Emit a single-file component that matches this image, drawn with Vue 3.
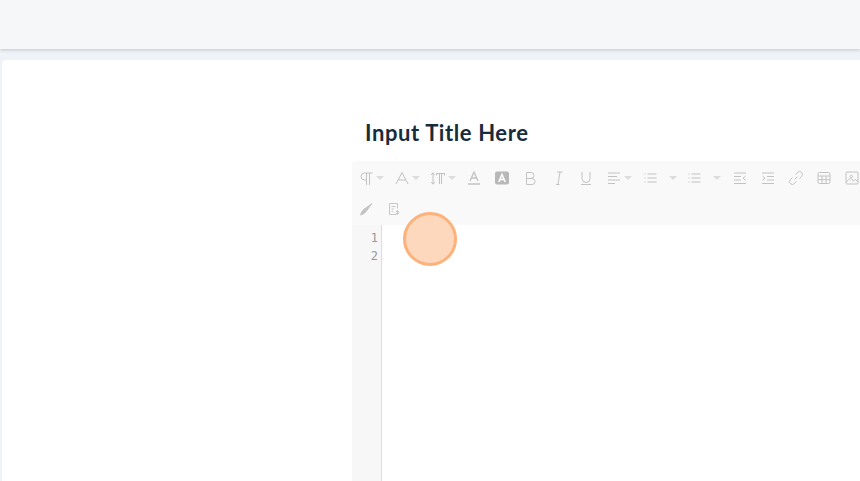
<script setup>
const row1 = [
  { w: 36, caret: 1, p: 'M14.5 3H6.5a3.5 3.5 0 0 0 0 7H8.5M8.5 3V15M11.5 3V15' },
  { w: 36, caret: 1, p: 'M2 14L8 2.5L14 14M4.2 10H11.8' },
  { w: 36, caret: 1, p: 'M3 3V14M1.2 5L3 2.8L4.8 5M1.2 12L3 14.2L4.8 12M6.5 3.5H15M9.5 3.5V14M11.5 3.5V14M6.5 3.5V5.5M14.5 3.5V5.5' },
  { w: 28, p: 'M4 11L8 2L12 11M5.3 8H10.7M2 14H14', thick: 1 },
  { w: 28, solid: 1 },
  { w: 28, p: 'M4.5 2.5H9a3 3 0 0 1 0 6H4.5ZM4.5 8.5H10a3 3 0 0 1 0 6H4.5Z' },
  { w: 28, p: 'M6 14.5H9.5M8 14.5L10 2M7 2H12.5' },
  { w: 28, p: 'M4 2V8.5a4 4 0 0 0 8 0V2M3 14.5H13' },
  { w: 36, caret: 1, p: 'M2 3H14M2 6.5H11M2 10H14M2 13.5H9' },
  { w: 44, caret: 2, p: 'M5.5 4H14.5M5.5 8H14.5M5.5 12H14.5M3 3.5V4.5M3 7.5V8.5M3 11.5V12.5' },
  { w: 46, caret: 2, p: 'M5.5 4H14.5M5.5 8H14.5M5.5 12H14.5M3 3.5V4.5M3 7.5V8.5M3 11.5V12.5' },
  { w: 28, p: 'M2 3H14M2 6.5H9M2 10H9M2 13.5H14M13.5 6.2L11 8.2L13.5 10.2' },
  { w: 28, p: 'M2 3H14M7 6.5H14M7 10H14M2 13.5H14M2.5 6.2L5 8.2L2.5 10.2' },
  { w: 28, p: 'M6.7 9.3L9.3 6.7M7.5 4.5L9.6 2.4a2.8 2.8 0 0 1 4 4L11.5 8.5M8.5 11.5L6.4 13.6a2.8 2.8 0 0 1-4-4L4.5 7.5' },
  { w: 28, p: 'M3.5 2.5H12.5a1.5 1.5 0 0 1 1.5 1.5V12a1.5 1.5 0 0 1-1.5 1.5H3.5A1.5 1.5 0 0 1 2 12V4a1.5 1.5 0 0 1 1.5-1.5ZM2 6H14M2 9.7H14M6 6V13.5M10 6V13.5' },
  { w: 28, p: 'M3 2H13a1 1 0 0 1 1 1V13a1 1 0 0 1-1 1H3a1 1 0 0 1-1-1V3a1 1 0 0 1 1-1ZM2.3 12L6.5 8L9.5 11L11.5 9.5L14 12M6 6.5a1.3 1.3 0 1 0 0-.1' },
]
const row2 = [
  { w: 28, p: 'M14 2.5L8.5 10C7 12 5 13.5 2.5 14C3 11.5 5 8.5 7 7.5Z', fill: 1 },
  { w: 28, p: 'M10.5 13.5H3.5V2.5H11.5V7.5M5.5 5.5H9.5M5.5 8H8M5.5 10.5H7M10 10.5H13M11.5 9V13.2M11.5 13.5L9.8 11.6M11.5 13.5L13.3 11.6' },
]
const lines = [1, 2]
</script>

<template>
  <div class="page">
    <header class="topbar"></header>
    <main class="card">
      <section class="content">
        <h1 class="title">Input Title Here</h1>
        <div class="editor">
          <div class="toolbar">
            <div class="row first">
              <span v-for="(b, i) in row1" :key="i" class="btn" :style="{ width: b.w + 'px' }">
                <svg class="icon" viewBox="0 0 16 16">
                  <template v-if="b.solid">
                    <rect x="1" y="1.5" width="14" height="13" rx="2" fill="#b8b8b8" />
                    <path d="M4.8 12L8 4.5L11.2 12M6 9.5H10" fill="none" stroke="#fff" stroke-width="1.6" />
                  </template>
                  <path v-else :d="b.p" :fill="b.fill ? '#c2c2c2' : 'none'" stroke="#c2c2c2" :stroke-width="b.thick ? 1.3 : 1" />
                </svg>
                <i v-if="b.caret" class="caret" :class="{ far: b.caret === 2 }"></i>
              </span>
            </div>
            <div class="row">
              <span v-for="(b, i) in row2" :key="i" class="btn" :style="{ width: b.w + 'px' }">
                <svg class="icon" viewBox="0 0 16 16">
                  <path :d="b.p" :fill="b.fill ? '#c2c2c2' : 'none'" stroke="#c8c8c8" />
                </svg>
              </span>
            </div>
          </div>
          <div class="code">
            <div class="gutter">
              <div v-for="n in lines" :key="n" class="num">{{ n }}</div>
            </div>
            <div class="lines"></div>
          </div>
        </div>
      </section>
    </main>
    <div class="cursor"></div>
  </div>
</template>

<style scoped>
.page {
  position: relative;
  width: 860px;
  height: 481px;
  overflow: hidden;
  background: #eff2f6;
  font-family: Lato, "Liberation Sans", sans-serif;
}
.topbar {
  height: 49px;
  background: #f5f7f9;
  box-shadow: 0 1px 3px rgba(120, 150, 175, 0.45);
}
.card {
  margin: 11px 0 0 2px;
  height: 421px;
  background: #fff;
  border-radius: 4px 0 0 0;
  padding-left: 350px;
  overflow: hidden;
}
.content {
  width: 520px;
}
.title {
  margin: 0;
  padding: 59px 0 0 13px;
  height: 42px;
  font-size: 22px;
  line-height: 28px;
  letter-spacing: 0.6px;
  font-weight: 700;
  color: #172c3c;
}
.editor {
  display: flex;
  flex-direction: column;
}
.toolbar {
  height: 64px;
  background: #f9f9f9;
  border-radius: 4px 0 0 0;
}
.row {
  display: flex;
  height: 32px;
  align-items: center;
}
.row.first {
  padding-top: 1px;
  box-sizing: border-box;
}
.btn {
  flex: none;
  display: flex;
  align-items: center;
  padding-left: 6px;
  box-sizing: border-box;
}
.icon {
  width: 16px;
  height: 16px;
  flex: none;
  display: block;
}
.caret {
  margin-left: 2px;
  width: 0;
  height: 0;
  border: 4px solid transparent;
  border-top: 4px solid #dcdcdc;
  border-bottom: 0;
}
.caret.far {
  margin-left: 11px;
}
.code {
  display: flex;
  height: 256px;
}
.gutter {
  width: 29px;
  background: #f7f7f7;
  border-right: 1px solid #ddd;
  padding-top: 4px;
}
.num {
  height: 18px;
  line-height: 18px;
  padding-right: 3px;
  text-align: right;
  font-family: "DejaVu Sans Mono", monospace;
  font-size: 12px;
  color: #999;
}
.lines {
  flex: 1;
  background: #fff;
}
.cursor {
  position: absolute;
  left: 403px;
  top: 212px;
  width: 54px;
  height: 54px;
  box-sizing: border-box;
  border-radius: 50%;
  background: #fed8bd;
  border: 3px solid #fdb27a;
}
</style>
